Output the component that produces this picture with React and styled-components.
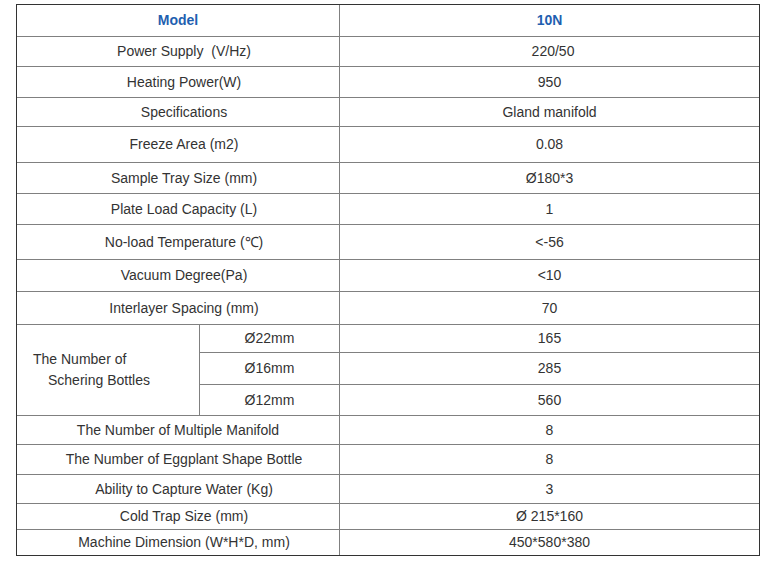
import React from 'react';
import styled, { createGlobalStyle } from 'styled-components';

const GlobalStyle = createGlobalStyle`
  html, body {
    margin: 0;
    padding: 0;
    background: #ffffff;
  }
  body {
    font-family: 'Liberation Sans', Arial, sans-serif;
  }
`;

const Page = styled.div`
  padding: 4px 0 0 16px;
`;

const Frame = styled.div`
  width: 742px;
  border: 1px solid #333333;
`;

const Table = styled.table`
  width: 742px;
  border-collapse: separate;
  border-spacing: 0;
  table-layout: fixed;
  font-size: 14px;
  color: #333333;
`;

const Row = styled.tr`
  height: ${props => props.$h}px;

  &:last-child td {
    border-bottom: none;
  }
`;

const Cell = styled.td`
  box-sizing: border-box;
  padding: 0 0 0 ${props => props.$pad || 0}px;
  text-align: ${props => props.$left ? 'left' : 'center'};
  vertical-align: middle;
  border-right: 1px solid #808080;
  border-bottom: 1px solid #808080;
  line-height: 21px;
  white-space: nowrap;

  &:last-child {
    border-right: none;
  }
`;

const HeadCell = styled(Cell)`
  color: #1f5fb0;
  font-weight: bold;
`;

const GroupLabel = styled.div`
  padding-left: 15px;
`;

const rows = [
  { h: 30, label: 'Power Supply\u00a0\u00a0(V/Hz)', value: '220/50', vpad: 7 },
  { h: 31, label: 'Heating Power(W)', value: '950' },
  { h: 29, label: 'Specifications', value: 'Gland manifold' },
  { h: 36, label: 'Freeze Area (m2)', value: '0.08' },
  { h: 31, label: 'Sample Tray Size (mm)', value: 'Ø180*3' },
  { h: 31, label: 'Plate Load Capacity (L)', value: '1' },
  { h: 35, label: 'No-load Temperature (℃)', value: '<-56' },
  { h: 32, label: 'Vacuum Degree(Pa)', value: '<10' },
  { h: 33, label: 'Interlayer Spacing (mm)', value: '70' },
];

const bottles = [
  { h: 28, size: 'Ø22mm', value: '165' },
  { h: 32, size: 'Ø16mm', value: '285' },
  { h: 31, size: 'Ø12mm', value: '560' },
];

const tail = [
  { h: 29, label: 'The Number of Multiple Manifold', value: '8', lpad: 0 },
  { h: 30, label: 'The Number of Eggplant Shape Bottle', value: '8' },
  { h: 29, label: 'Ability to Capture Water (Kg)', value: '3' },
  { h: 26, label: 'Cold Trap Size (mm)', value: 'Ø 215*160' },
  { h: 25, label: 'Machine Dimension (W*H*D, mm)', value: '450*580*380' },
];

const SpecRow = ({ row }) => (
  <Row $h={row.h}>
    <Cell colSpan={2} $pad={row.lpad ?? 12}>{row.label}</Cell>
    <Cell $pad={row.vpad || 0}>{row.value}</Cell>
  </Row>
);

const App = () => (
  <>
    <GlobalStyle />
    <Page>
      <Frame>
        <Table>
          <colgroup>
            <col style={{ width: 183 }} />
            <col style={{ width: 140 }} />
            <col style={{ width: 419 }} />
          </colgroup>
          <tbody>
            <Row $h={32}>
              <HeadCell colSpan={2}>Model</HeadCell>
              <HeadCell>10N</HeadCell>
            </Row>
            {rows.map((row, i) => <SpecRow key={i} row={row} />)}
            {bottles.map((b, i) => (
              <Row key={b.size} $h={b.h}>
                {i === 0 && (
                  <Cell rowSpan={3} $left $pad={16}>
                    The Number of
                    <GroupLabel>Schering Bottles</GroupLabel>
                  </Cell>
                )}
                <Cell>{b.size}</Cell>
                <Cell>{b.value}</Cell>
              </Row>
            ))}
            {tail.map((row, i) => <SpecRow key={i} row={row} />)}
          </tbody>
        </Table>
      </Frame>
    </Page>
  </>
);

export default App;
